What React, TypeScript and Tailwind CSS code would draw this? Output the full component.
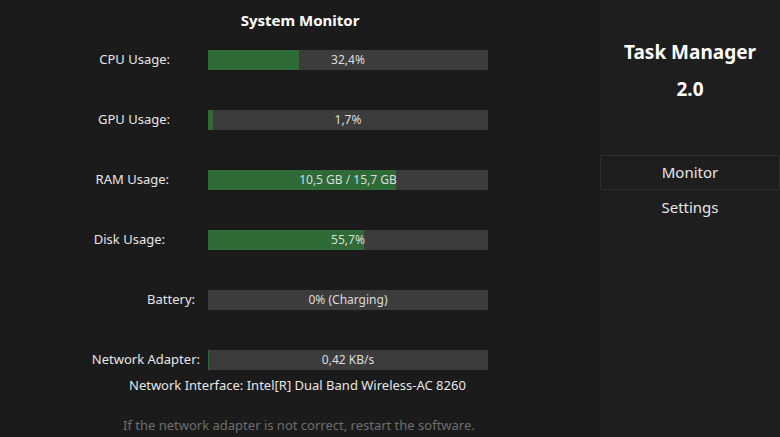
import React from 'react';

type Row = { label: string; value: string; pct: number; pr: string };

const rows: Row[] = [
  { label: 'CPU Usage:', value: '32,4%', pct: 32.4, pr: 'pr-[38px]' },
  { label: 'GPU Usage:', value: '1,7%', pct: 1.7, pr: 'pr-[38px]' },
  { label: 'RAM Usage:', value: '10,5 GB / 15,7 GB', pct: 67.2, pr: 'pr-[39px]' },
  { label: 'Disk Usage:', value: '55,7%', pct: 55.7, pr: 'pr-[43px]' },
  { label: 'Battery:', value: '0% (Charging)', pct: 0, pr: 'pr-[13px]' },
  { label: 'Network Adapter:', value: '0,42 KB/s', pct: 0.4, pr: 'pr-[8px]' },
];

function Bar({ value, pct }: { value: string; pct: number }) {
  return (
    <div className="relative w-[280px] h-[20px] bg-[#3c3c3c]">
      <div className="h-full bg-[#2e6b37]" style={{ width: `${pct}%` }} />
      <div className="absolute inset-0 flex items-center justify-center text-[12px] text-[#dcdcdc]">
        {value}
      </div>
    </div>
  );
}

export default function App() {
  return (
    <div
      className="w-[780px] h-[437px] flex bg-[#1b1b1b] text-[#e6e6e6] overflow-hidden"
      style={{ fontFamily: '"Noto Sans", "Open Sans", sans-serif' }}
    >
      {/* Monitor panel */}
      <div className="w-[600px] flex flex-col">
        <div className="h-[40px] flex items-center justify-center text-[15px] font-bold text-white">
          System Monitor
        </div>
        <div className="flex flex-col gap-[40px] pt-[10px]">
          {rows.map((r) => (
            <div key={r.label} className="flex items-center h-[20px]">
              <div className={`w-[208px] text-right text-[13px] ${r.pr}`}>{r.label}</div>
              <Bar value={r.value} pct={r.pct} />
            </div>
          ))}
        </div>
        <div className="pl-[129px] pt-[6px] text-[13px] text-[#e6e6e6]">
          Network Interface: Intel[R] Dual Band Wireless-AC 8260
        </div>
        <div className="pl-[123px] pt-[20px] text-[13px] text-[#6e6e6e]">
          If the network adapter is not correct, restart the software.
        </div>
      </div>

      {/* Side panel */}
      <div className="flex-1 bg-[#1e1e1e] flex flex-col">
        <div className="pt-[38px] text-center text-[19px] font-bold text-white leading-[28px]">
          Task Manager
        </div>
        <div className="pt-[9px] text-center text-[19px] font-bold text-white leading-[28px]">
          2.0
        </div>
        <div className="mt-[52px] h-[35px] border border-[#2c2c2c] flex items-center justify-center text-[15px]">
          Monitor
        </div>
        <div className="h-[35px] flex items-center justify-center text-[15px]">Settings</div>
      </div>
    </div>
  );
}
